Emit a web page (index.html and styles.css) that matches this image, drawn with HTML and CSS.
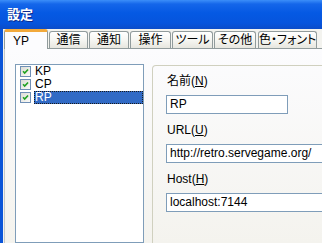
FILE: index.html
```html
<!DOCTYPE html>
<html lang="ja">
<head>
    <meta charset="UTF-8">
    <title>設定</title>
    <link rel="stylesheet" href="styles.css">
</head>
<body>
    <div class="window">
        <!-- Title bar -->
        <div class="titlebar">
            <span class="title">設定</span>
        </div>

        <div class="dialog">
            <!-- Tab strip -->
            <ul class="tabs">
                <li class="tab active">YP</li>
                <li class="tab">通信</li>
                <li class="tab">通知</li>
                <li class="tab">操作</li>
                <li class="tab">ツール</li>
                <li class="tab">その他</li>
                <li class="tab">色・フォント</li>
            </ul>

            <!-- YP page -->
            <div class="page">
                <ul class="yp-list">
                    <li class="yp-item">
                        <span class="check"><svg viewBox="0 0 11 11"><path d="M2.5 5.2L4.5 7.3L8.6 3" /></svg></span>
                        <span class="yp-name">KP</span>
                    </li>
                    <li class="yp-item">
                        <span class="check"><svg viewBox="0 0 11 11"><path d="M2.5 5.2L4.5 7.3L8.6 3" /></svg></span>
                        <span class="yp-name">CP</span>
                    </li>
                    <li class="yp-item selected">
                        <span class="check"><svg viewBox="0 0 11 11"><path d="M2.5 5.2L4.5 7.3L8.6 3" /></svg></span>
                        <span class="yp-name">RP</span>
                    </li>
                </ul>

                <div class="group">
                    <div class="field-label">名前(<u>N</u>)</div>
                    <div class="field field-short">RP</div>

                    <div class="field-label">URL(<u>U</u>)</div>
                    <div class="field">http://retro.servegame.org/</div>

                    <div class="field-label">Host(<u>H</u>)</div>
                    <div class="field">localhost:7144</div>
                </div>
            </div>
        </div>
    </div>
</body>
</html>
```

FILE: styles.css
```css
* {
    margin: 0;
    padding: 0;
    box-sizing: border-box;
    font-family: 'Liberation Sans', 'Noto Sans CJK JP', sans-serif;
}

body {
    width: 322px;
    height: 243px;
    overflow: hidden;
    background-color: #f4f3ee;
    color: #000;
    font-size: 12px;
}

.window {
    display: flex;
    flex-direction: column;
    height: 100vh;
    border-left: 3px solid #0b55d8;
}

/* Title bar */
.titlebar {
    height: 29px;
    margin-left: -3px;
    padding: 7px 0 0 7px;
    background: linear-gradient(to bottom, #3b8ef9 0%, #1466ea 14%, #0559e3 45%, #0654dd 80%, #0b4cc9 100%);
}

.title {
    color: #fff;
    font-size: 13px;
    font-weight: bold;
    line-height: 15px;
    text-shadow: 1px 1px 0 #0c2a8e;
}

.dialog {
    flex: 1;
    display: flex;
    flex-direction: column;
    padding-left: 1px;
    background-color: #f3f3ef;
}

/* Tabs */
.tabs {
    display: flex;
    align-items: flex-end;
    height: 19px;
    list-style: none;
    position: relative;
    z-index: 1;
}

.tab {
    flex-shrink: 0;
    height: 17px;
    margin-right: 1px;
    padding: 2px 0 0;
    text-align: center;
    line-height: 13px;
    white-space: nowrap;
    overflow: hidden;
    font-feature-settings: "palt" 1;
    border: 1px solid #919b9c;
    border-bottom: none;
    border-radius: 3px 3px 0 0;
    background: linear-gradient(to bottom, #ffffff 0%, #f6f6f2 50%, #e7e6df 100%);
}

.tab:nth-child(2) { width: 39px; }
.tab:nth-child(3) { width: 40px; }
.tab:nth-child(4) { width: 41px; }
.tab:nth-child(5) { width: 41px; }
.tab:nth-child(6) { width: 42px; }
.tab:nth-child(7) { width: 59px; margin-left: 1px; }

.tab.active {
    width: 44px;
    height: 20px;
    margin-bottom: -1px;
    padding-top: 3px;
    text-align: left;
    padding-left: 8px;
    border-top: 3px solid #f2a93b;
    background: #fcfcfe;
}

/* Tab page */
.page {
    flex: 1;
    display: flex;
    align-items: flex-start;
    padding: 15px 0 0 10px;
    border-top: 1px solid #919b9c;
    border-left: 1px solid #c4c8c9;
    background: linear-gradient(to bottom, #fcfcfe, #f4f3ee);
}

/* YP list */
.yp-list {
    align-self: stretch;
    width: 129px;
    flex-shrink: 0;
    list-style: none;
    border: 1px solid #7f9db9;
    background-color: #fff;
}

.yp-item {
    display: flex;
    align-items: center;
    height: 13px;
    line-height: 13px;
}

.check {
    display: block;
    width: 11px;
    height: 11px;
    margin: 0 3px 0 4px;
    border: 1px solid #6f8fb5;
    background: linear-gradient(135deg, #dcdcd5, #fbfbf9);
}

.check svg {
    display: block;
    width: 9px;
    height: 9px;
    fill: none;
    stroke: #21a121;
    stroke-width: 2;
}

.yp-name {
    flex: 1;
    height: 13px;
    padding-left: 1px;
}

.yp-item.selected .yp-name {
    color: #fff;
    background-color: #316ac5;
    outline: 1px dotted #1a1a1a;
    outline-offset: -1px;
}

/* Settings group */
.group {
    flex-shrink: 0;
    width: 200px;
    align-self: stretch;
    margin: 1px 0 0 8px;
    padding: 8px 0 0 13px;
    border: 1px solid #d0d0bf;
    border-bottom: none;
    border-radius: 4px 0 0 0;
}

.field-label {
    height: 14px;
    line-height: 14px;
    padding-left: 1px;
}

.field-label u {
    text-underline-offset: 1px;
}

.field {
    width: 170px;
    height: 19px;
    margin: 7px 0 9px;
    padding-left: 3px;
    line-height: 17px;
    border: 1px solid #7f9db9;
    background-color: #fff;
    white-space: nowrap;
}

.field-short {
    width: 122px;
}
```
